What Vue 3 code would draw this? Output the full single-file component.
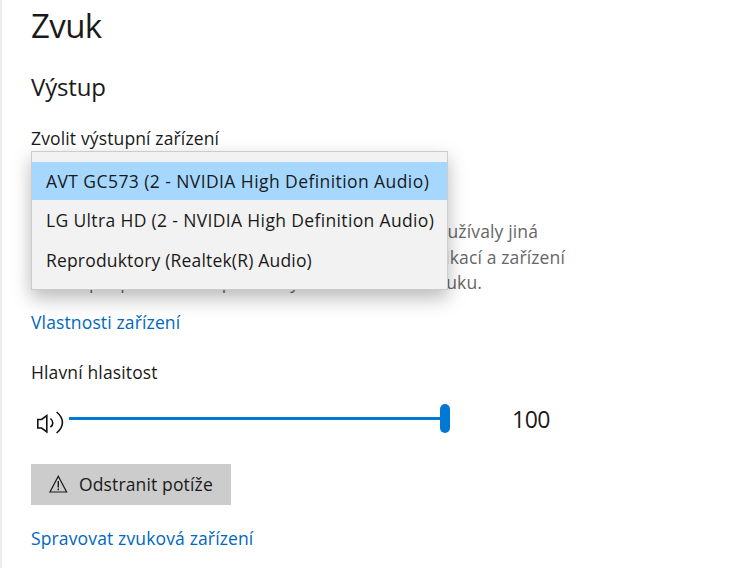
<template>
  <main class="page">
    <h1 class="title">Zvuk</h1>
    <h2 class="section">Výstup</h2>
    <div class="label">Zvolit výstupní zařízení</div>
    <div class="picker">
      <div class="spacer"></div>
      <div class="note">
        <div class="line line-1">Některé aplikace můžou být nastavené tak, aby používaly jiná</div>
        <div class="line line-2">zvuková zařízení než tady vybraná. Hlasitost aplikací a zařízení</div>
        <div class="line line-3">přizpůsobíte v upřesněných možnostech zvuku.</div>
      </div>
      <ul class="menu">
        <li v-for="(d, i) in devices" :key="d" class="item" :class="{ selected: i === 0 }">{{ d }}</li>
      </ul>
    </div>
    <a class="link props">Vlastnosti zařízení</a>
    <div class="label volume">Hlavní hlasitost</div>
    <div class="slider-row">
      <svg class="speaker" width="28" height="36" viewBox="0 0 28 36" fill="none" stroke="#111" stroke-width="1.6">
        <path d="M1.8 18.5h3.8L10.8 14.5v16.5L5.6 27H1.8z" />
        <path d="M14.4 17.5c3.2 2.8 3.2 6 0 8.6" />
        <path d="M20.6 11c7.8 6.5 7.8 14.5 0 21" />
      </svg>
      <div class="track"><div class="thumb"></div></div>
      <div class="value">100</div>
    </div>
    <button class="fix">
      <svg width="20" height="18" viewBox="0 0 20 18" fill="none" stroke="#1a1a1a" stroke-width="1.2">
        <path d="M9.3 1.2 17.6 17H1z" stroke-linejoin="miter" />
        <path d="M9.3 6v6.6M9.3 13.6v1.6" stroke-width="1.4" />
      </svg>
      <span>Odstranit potíže</span>
    </button>
    <a class="link manage">Spravovat zvuková zařízení</a>
  </main>
</template>

<script setup>
const devices = [
  'AVT GC573 (2 - NVIDIA High Definition Audio)',
  'LG Ultra HD (2 - NVIDIA High Definition Audio)',
  'Reproduktory (Realtek(R) Audio)',
]
</script>

<style>
html, body { margin: 0; background: #fff; overflow: hidden; }
</style>

<style scoped>
.page {
  width: 745px;
  height: 568px;
  box-sizing: border-box;
  overflow: hidden;
  background: #fff;
  color: #1a1a1a;
  font-family: "Open Sans", "Noto Sans", sans-serif;
  font-size: 17.5px;
  letter-spacing: 0.14px;
  border-left: 2px solid #ececec;
  padding-left: 29px;
}
.title { margin: 4px 0 0; font-size: 33px; line-height: 44px; font-weight: 400; letter-spacing: -0.6px; }
.section { margin: 22px 0 0; font-size: 24px; line-height: 34px; font-weight: 400; letter-spacing: -0.15px; }
.label { line-height: 24px; }
.section + .label { margin-top: 22px; }
.picker { position: relative; margin-top: 1px; }
.spacer { height: 68px; }
.note { color: #666; }
.line { line-height: 25.5px; white-space: nowrap; text-align: right; }
.line-1 { width: 507px; }
.line-2 { width: 534px; }
.line-3 { width: 451px; }
.menu {
  position: absolute;
  left: 0;
  top: 0;
  width: 417px;
  height: 139px;
  box-sizing: border-box;
  margin: 0;
  padding: 10px 0 0;
  list-style: none;
  background: #f2f2f2;
  border: 1px solid #ccc;
  box-shadow: 0 8px 18px rgba(0,0,0,0.28);
}
.item { height: 40px; line-height: 38px; padding-left: 14px; white-space: nowrap; color: #1a1a1a; }
.item:nth-child(1) { letter-spacing: 0.42px; }
.item:nth-child(2) { letter-spacing: 0.35px; }
.item:nth-child(3) { letter-spacing: 0.18px; }
.selected { background: #a6d8ff; height: 38px; margin-bottom: 1px; }
.link { display: block; color: #0067c0; line-height: 24px; }
.props { margin-top: 14px; }
.volume { margin-top: 26px; }
.slider-row { display: flex; align-items: center; margin-top: 20px; height: 30px; }
.speaker { flex: none; margin-left: 5px; }
.track { position: relative; margin-left: 5px; width: 380px; height: 3px; background: #0078d4; }
.thumb { position: absolute; right: -1px; top: -13px; width: 10px; height: 29px; border-radius: 5px; background: #0078d4; }
.value { margin-left: 63px; font-size: 23px; line-height: 30px; letter-spacing: -0.5px; }
.fix {
  display: flex;
  align-items: center;
  gap: 10px;
  width: 200px;
  height: 41px;
  margin-top: 30px;
  padding: 0 0 0 18px;
  border: 0;
  background: #ccc;
  color: #1a1a1a;
  font: inherit;
  letter-spacing: inherit;
}
.manage { margin-top: 21px; }
</style>
